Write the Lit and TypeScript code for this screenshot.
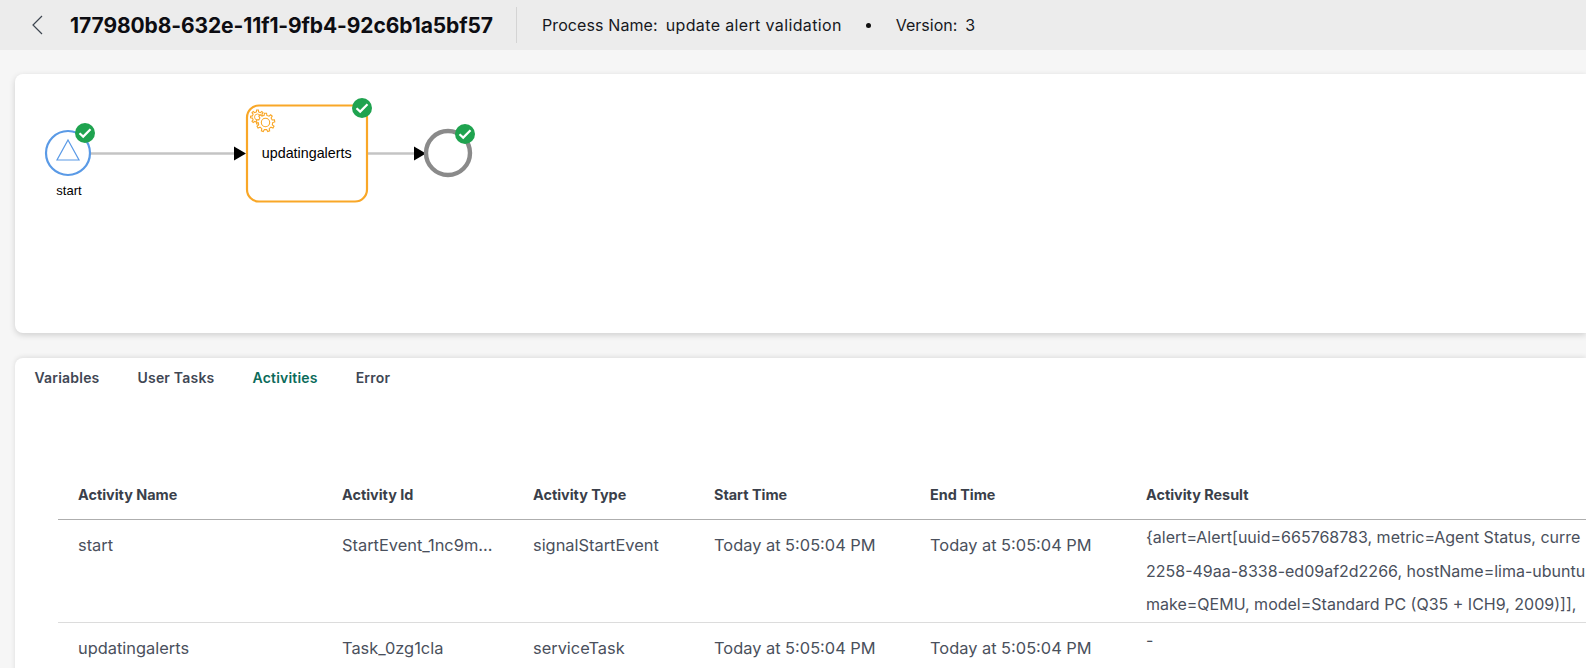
import { LitElement, html, css, svg } from "lit";
import { customElement } from "lit/decorators.js";

function gear(cx: number, cy: number, rOut: number, rIn: number, teeth: number): string {
  const pts: string[] = [];
  const step = (Math.PI * 2) / teeth;
  for (let i = 0; i < teeth; i++) {
    const a = i * step - Math.PI / 2;
    const seq: [number, number][] = [
      [rIn, a - step * 0.27],
      [rOut, a - step * 0.16],
      [rOut, a + step * 0.16],
      [rIn, a + step * 0.27],
    ];
    for (const [r, t] of seq) pts.push(`${(cx + r * Math.cos(t)).toFixed(2)} ${(cy + r * Math.sin(t)).toFixed(2)}`);
  }
  return "M" + pts.join("L") + "Z";
}

const badge = (x: number, y: number) => svg`
  <circle cx=${x} cy=${y} r="10" fill="#1fa34f"></circle>
  <path d="M${x - 5.5} ${y + 0.2}L${x - 1.8} ${y + 3.6}L${x + 5.5} ${y - 3.8}" fill="none" stroke="#fff" stroke-width="2.2"></path>
`;

const rows = [
  { name: "start", id: "StartEvent_1nc9m...", type: "signalStartEvent", start: "Today at 5:05:04 PM", end: "Today at 5:05:04 PM",
    result: ["{alert=Alert[uuid=665768783, metric=Agent Status, curre", "2258-49aa-8338-ed09af2d2266, hostName=lima-ubuntu", "make=QEMU, model=Standard PC (Q35 + ICH9, 2009)]],"] },
  { name: "updatingalerts", id: "Task_0zg1cla", type: "serviceTask", start: "Today at 5:05:04 PM", end: "Today at 5:05:04 PM", result: ["-"] },
];

@customElement("app-root")
export class AppRoot extends LitElement {
  static styles = css`
    :host { display: block; height: 668px; overflow: hidden; background: #f6f6f6; font-family: Inter, "Liberation Sans", sans-serif; color: #111; }
    .top { height: 50px; background: #ececec; display: flex; align-items: center; padding-left: 32px; }
    .back { display: block; width: 11px; height: 20px; margin-right: 27px; }
    .title { font-size: 21px; font-weight: 700; color: #0d0d12; letter-spacing: -0.1px; white-space: nowrap; width: 445.5px; }
    .divider { width: 1px; height: 36px; background: #d4d4d4; margin-right: 25.5px; }
    .meta { display: flex; align-items: center; font-size: 16px; color: #16181d; white-space: nowrap; }
    .meta .label { letter-spacing: 0.1px; }
    .meta .val { margin-left: 8px; letter-spacing: 0.36px; }
    .dot { width: 5px; height: 5px; border-radius: 50%; background: #111; margin: 0 24.5px; }
    .card { background: #fff; margin-left: 15px; border-radius: 8px 0 0 8px; }
    .diagram { margin-top: 24px; height: 235px; padding-top: 24px; box-shadow: 0 2px 6px rgba(0,0,0,.16); }
    .diagram svg { display: block; }
    .diagram text { font-family: "Liberation Sans", Arial, sans-serif; fill: #000; text-anchor: middle; }
    .panel { margin-top: 25px; height: 320px; box-shadow: 0 -1px 5px rgba(0,0,0,.1); border-radius: 8px 0 0 0; overflow: hidden; }
    .tabs { display: flex; gap: 38px; padding: 12px 0 0 19.5px; height: 17px; font-size: 14px; font-weight: 600; letter-spacing: 0.2px; color: #3f4754; white-space: nowrap; line-height: 16px; }
    .tabs .active { color: #0b6b5a; }
    .table { margin: 84px 0 0 43px; width: 1600px; }
    .row { display: grid; grid-template-columns: 264px 191px 181px 216px 216px 1fr; padding-left: 20px; white-space: nowrap; }
    .head { height: 46px; padding-bottom: 2px; align-items: center; border-bottom: 1px solid #aeaeae; font-size: 14.4px; font-weight: 700; color: #3a3f4a; }
    .body { height: 102px; border-bottom: 1px solid #dcdcdc; font-size: 16.4px; color: #4a505c; }
    .body > div { padding-top: 14px; line-height: 22px; }
    .body > .result { padding-top: 1px; font-size: 16px; line-height: 33.5px; }
    .result div { white-space: nowrap; }
  `;

  render() {
    return html`
      <div class="top">
        <svg class="back" viewBox="0 0 11 20"><path d="M10 1L1 10L10 19" fill="none" stroke="#3d4550" stroke-width="1.2"></path></svg>
        <div class="title">177980b8-632e-11f1-9fb4-92c6b1a5bf57</div>
        <div class="divider"></div>
        <div class="meta">
          <span class="label">Process Name:</span><span class="val">update alert validation</span>
          <span class="dot"></span>
          <span>Version:</span><span class="val">3</span>
        </div>
      </div>
      <div class="card diagram">
        <svg width="500" height="130" viewBox="15 98 500 130">
          <line x1="91" y1="153.5" x2="236" y2="153.5" stroke="#c4c4c4" stroke-width="2.6"></line>
          <line x1="368" y1="153.5" x2="416" y2="153.5" stroke="#c4c4c4" stroke-width="2.6"></line>
          <circle cx="68" cy="153" r="22" fill="#fff" stroke="#5a9ae6" stroke-width="2.2"></circle>
          <path d="M68 140L79 160H57Z" fill="none" stroke="#5a9ae6" stroke-width="1.2"></path>
          <path d="M234 146.5L246 153.5L234 160.5Z" fill="#000"></path>
          <rect x="247" y="105.5" width="120" height="96" rx="12" fill="#fff" stroke="#f9a727" stroke-width="2.2"></rect>
          <path d=${gear(257.5, 117, 7, 5.2, 8)} fill="none" stroke="#f9a727" stroke-width="1.1"></path>
          <circle cx="257.5" cy="117" r="3" fill="none" stroke="#f9a727" stroke-width="0.9"></circle>
          <path d=${gear(265.5, 122.5, 9.3, 7.2, 9)} fill="#fff" stroke="#f9a727" stroke-width="1.1"></path>
          <circle cx="265.5" cy="122.5" r="4.2" fill="none" stroke="#f9a727" stroke-width="1.1"></circle>
          <text x="306.7" y="158" font-size="14.3">updatingalerts</text>
          <path d="M414 146.5L426 153.5L414 160.5Z" fill="#000"></path>
          <circle cx="448" cy="153" r="22" fill="none" stroke="#8a8a8a" stroke-width="4.4"></circle>
          <text x="69" y="195" font-size="13">start</text>
          ${badge(85, 133)} ${badge(362, 108)} ${badge(465, 134)}
        </svg>
      </div>
      <div class="card panel">
        <div class="tabs">
          <span>Variables</span><span>User Tasks</span><span class="active">Activities</span><span>Error</span>
        </div>
        <div class="table">
          <div class="row head">
            <div>Activity Name</div><div>Activity Id</div><div>Activity Type</div><div>Start Time</div><div>End Time</div><div>Activity Result</div>
          </div>
          ${rows.map((r) => html`
            <div class="row body">
              <div>${r.name}</div><div>${r.id}</div><div>${r.type}</div><div>${r.start}</div><div>${r.end}</div>
              <div class="result">${r.result.map((l) => html`<div>${l}</div>`)}</div>
            </div>
          `)}
        </div>
      </div>
    `;
  }
}
